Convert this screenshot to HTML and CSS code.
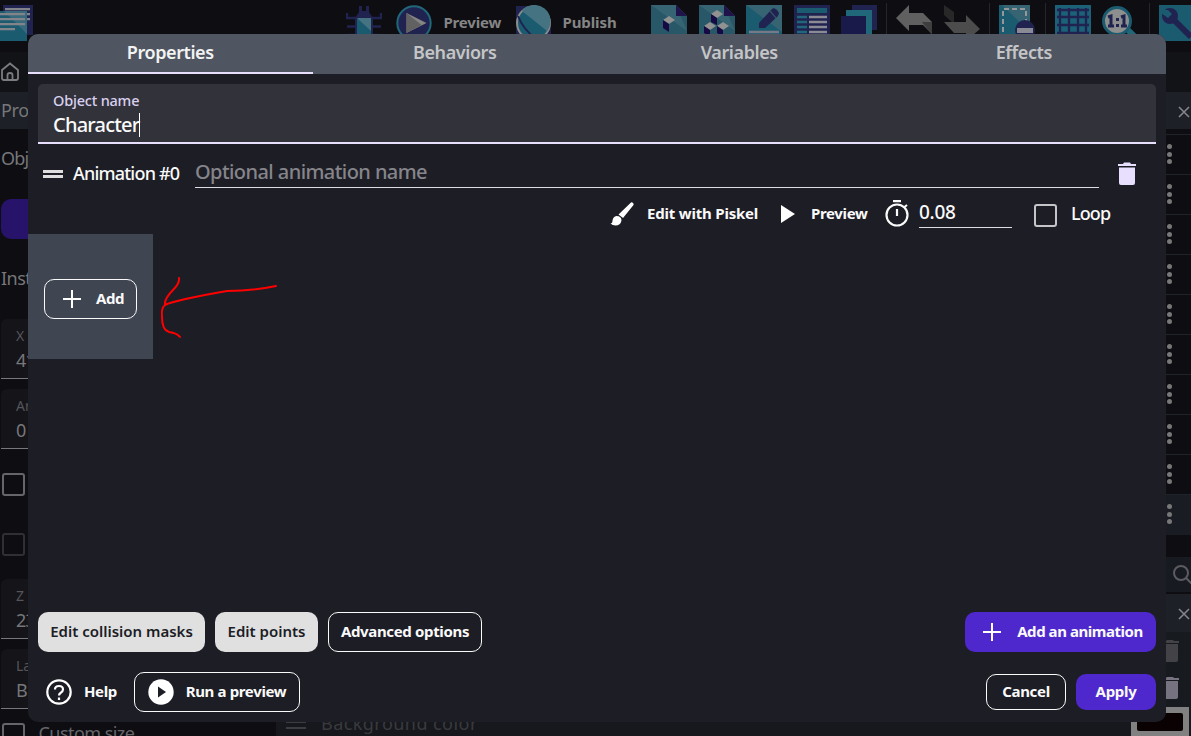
FILE: index.html
```html
<!DOCTYPE html>
<html lang="en">
<head>
<meta charset="utf-8">
<title>Object editor</title>
<link rel="stylesheet" href="styles.css">
</head>
<body>
<div class="app">
  <header class="toolbar">
    <svg class="icon project" viewBox="0 0 36 36"><path fill="#202250" d="M4 0h30v30H4z"/><path fill="#1b5b70" d="M0 6h28v30H0z"/><path fill="#467382" opacity=".65" d="M5 6h23v23z"/><path stroke="#828489" stroke-width="2.3" d="M6 4.200h25M1 9.200h25M28 9.200h3M1 14.200h25M28 14.200h3M1 19.200h25M1 24.200h15"/></svg>
    <div class="tools">
      <svg class="icon" viewBox="0 0 36 36"><path fill="none" stroke="#202250" stroke-width="2.500" d="M1 8v5h9M1 21.500h34M1 30h34M35 8v5h-9"/><path fill="#202250" d="M13 1h3v5h4V1h3v6l4 6H9l4-6z"/><path fill="#1b5b70" stroke="#202250" stroke-width="2" d="M10 13h16v23H10z"/><path fill="#467382" d="M11 13h14v13z"/></svg>
      <svg class="icon play" viewBox="0 0 36 36"><circle cx="18" cy="18" r="16.700" fill="#202250" stroke="#206779" stroke-width="2"/><path fill="#858585" d="M10.500 8v20l20-10z"/><path fill="#616161" d="M10.500 8v20l15-8z"/></svg>
      <span class="tool-label preview-label">Preview</span>
      <svg class="icon" viewBox="0 0 36 36"><path fill="#202250" d="M1 1h18v34H1zM18 20h18v15H18z"/><circle cx="18.500" cy="18" r="16.500" fill="#1b5b70" stroke="#8a8b8c" stroke-width="2"/><path fill="#467382" d="M7 6a16 16 0 0 1 25 20z"/><path fill="none" stroke="#202250" stroke-width="2" d="M3 11q5 13 18 23"/></svg>
      <span class="tool-label publish-label">Publish</span>
      <svg class="icon" viewBox="0 0 36 36"><path fill="#285767" d="M0 0h25l11 11v25H0z"/><path fill="#376472" d="M0 0h25l11 26z"/><path fill="#20134c" d="M25 0v11h11z"/><path fill="#919191" d="M12 15l6-4 6 4-6 4z"/><path fill="#170944" d="M12 15l6 4v8l-6-4z"/></svg>
      <svg class="icon" viewBox="0 0 36 36"><path fill="#285767" d="M0 0h25l11 11v25H0z"/><path fill="#376472" d="M0 0h25l11 26z"/><path fill="#20134c" d="M25 0v11h11z"/><path fill="#919191" d="M12 9l6-4 6 4-6 4zM5 21l6-4 6 4-6 4zM18 21l6-4 6 4-6 4z"/><path fill="#170944" d="M12 9l6 4v7l-6-3zM5 21l6 4v7l-6-4zM18 21l6 4v7l-6-4z"/></svg>
      <svg class="icon" viewBox="0 0 36 36"><path fill="#1b5b70" d="M0 0h36v36H0z"/><path fill="#376472" d="M0 0h36v27z"/><path fill="#202250" d="M13 22v-4L26 4l2-1q3 1 5 5l-1 3L19 23h-6z"/><path stroke="#37526a" stroke-width="1.200" d="M24 6l6 7"/><path stroke="#777987" stroke-width="2.500" d="M3 27h30"/></svg>
      <svg class="icon" viewBox="0 0 36 36"><path fill="#202250" d="M0 0h36v36H0z"/><path fill="#1b5b70" d="M3 3h30v5H3z"/><path stroke="#206779" stroke-width="2.500" d="M3 12h10M3 17h10M3 22h10M3 27h10"/><path stroke="#8a8b93" stroke-width="2.500" d="M15 12h18M15 17h18M15 22h18M15 27h18"/></svg>
      <svg class="icon" viewBox="0 0 36 36"><path fill="#202250" d="M11 0h25v25H11z"/><path fill="#206779" d="M5 5h26v26H5z"/><path fill="#19194a" d="M0 11h25v25H0z"/></svg>
      <i class="divider"></i>
      <svg class="icon" viewBox="0 0 36 36"><path fill="#606060" d="M0 13L13 0v8h14l9 9v12l-9-9H13v6z"/><path fill="#3e3e3e" d="M26 17h10v13z"/></svg>
      <svg class="icon" viewBox="0 0 36 36"><path fill="#282828" d="M0 0l10 7v12L0 10z"/><path fill="#4c4c4c" d="M0 17h22v-7l14 14-14 12v-8H10z"/></svg>
      <i class="divider"></i>
      <svg class="icon" viewBox="0 0 36 36"><path fill="#1b5b70" d="M0 0h31v36H0z"/><path fill="#376472" d="M3 0h28v27z"/><path fill="none" stroke="#969799" stroke-width="2" stroke-dasharray="5 3" d="M4 27V4h23v14"/><circle cx="26" cy="25" r="10" fill="#202250"/><path fill="#8a8a94" d="M18 23h16v5H18z"/></svg>
      <i class="divider"></i>
      <svg class="icon" viewBox="0 0 36 36"><path fill="#1b6178" d="M0 0h36v36H0z"/><path stroke="#202250" stroke-width="2.300" d="M5 3v31M14 3v31M23 3v31M31 3v31M2 5h32M2 12h32M2 20h32M2 28h32"/></svg>
      <svg class="icon" viewBox="0 0 36 36"><path stroke="#206779" stroke-width="6" d="M25 24l12 12"/><circle cx="15" cy="16" r="13.500" fill="#8d8e8e" stroke="#1b5b70" stroke-width="3"/><path fill="none" stroke="#202250" stroke-width="3" d="M6 12l3-1v10M6 21h6M19 12l3-1v10M19 21h6"/><path fill="#202250" d="M14 13h3v3h-3zM14 19h3v3h-3z"/></svg>
      <i class="divider last"></i>
      <svg class="icon" viewBox="0 0 36 36"><path fill="#1b5b70" d="M0 0h36v36H0z"/><path stroke="#202250" stroke-width="6" d="M12 12l20 20"/><circle cx="11" cy="11" r="8" fill="#202250"/><path fill="#1b5b70" d="M2 5h7l4 4-4 4-7-5z"/></svg>
    </div>
  </header>
  <div class="tabstrip"><svg class="home" viewBox="0 0 20 20"><path d="M2 8l8-6.500L18 8v8q0 2-2 2H4q-2 0-2-2z"/><path d="M7.500 18v-5q0-2 2.500-2t2.500 2v5"/></svg></div>
  <div class="workspace">
    <aside class="inspector">
      <div class="panel-head">Pro</div>
      <div class="object-title">Obj</div>
      <div class="purple-button"></div>
      <div class="instance-title">Inst</div>
      <div class="prop"><small>X</small><span>41</span></div>
      <div class="prop"><small>An</small><span>0</span></div>
      <i class="check first"></i>
      <i class="check disabled"></i>
      <div class="prop zprop"><small>Z</small><span>23</span></div>
      <div class="prop"><small>La</small><span>B</span></div>
      <div class="custom"><i class="check"></i><span>Custom size</span></div>
    </aside>
    <section class="scene"><i class="grip"></i><span>Background color</span></section>
    <aside class="objects">
      <div class="panel-head"><svg class="cross" viewBox="0 0 12 12"><path d="M1 1l10 10M11 1L1 11"/></svg></div>
      <div class="rows">
        <div class="row"><b></b><b></b><b></b></div><div class="row"><b></b><b></b><b></b></div><div class="row"><b></b><b></b><b></b></div><div class="row"><b></b><b></b><b></b></div><div class="row"><b></b><b></b><b></b></div><div class="row"><b></b><b></b><b></b></div><div class="row"><b></b><b></b><b></b></div><div class="row"><b></b><b></b><b></b></div><div class="row"><b></b><b></b><b></b></div><div class="row chosen"><b></b><b></b><b></b></div>
      </div>
      <div class="search"><svg viewBox="0 0 20 20"><circle cx="9" cy="9" r="7"/><path d="M14 14l6 6"/></svg></div>
      <div class="panel-head second"><svg class="cross" viewBox="0 0 12 12"><path d="M1 1l10 10M11 1L1 11"/></svg></div>
      <div class="layers">
        <svg class="bin faded" viewBox="0 0 18 23"><path d="M0 2h5l1-1h6l1 1h5v2H0zM1 5h16v16q0 2-2 2H3q-2 0-2-2z"/></svg>
        <svg class="bin" viewBox="0 0 18 23"><path d="M0 2h5l1-1h6l1 1h5v2H0zM1 5h16v16q0 2-2 2H3q-2 0-2-2z"/></svg>
        <div class="swatch"><div></div></div>
      </div>
    </aside>
  </div>
</div>

<div class="overlay">
  <main class="dialog">
    <nav class="tabs"><span class="tab active">Properties</span><span class="tab">Behaviors</span><span class="tab">Variables</span><span class="tab">Effects</span></nav>
    <div class="name-field"><label>Object name</label><div class="value"><span>Character</span><i class="caret"></i></div></div>
    <div class="animation">
      <i class="grip"></i><span class="anim-title">Animation #0</span>
      <div class="anim-input"><span>Optional animation name</span></div>
      <svg class="trash" viewBox="0 0 18 23"><path d="M0 2h5l1-1.500h6L13 2h5v2H0zM1 5.500h16V21q0 2-2 2H3q-2 0-2-2z"/></svg>
    </div>
    <div class="controls">
      <svg class="brush" viewBox="0 0 24 24"><path d="M21 .5q1-.5 2 .5t.5 2L13 16 8.500 12.500zM6.500 14q5 0 5 4.500-1 5-6 5-3 0-5-2 2 0 2-3 .5-4 4-4.500z"/></svg>
      <span class="bold piskel">Edit with Piskel</span>
      <svg class="triangle" viewBox="0 0 14 18"><path d="M0 0l14 9-14 9z"/></svg>
      <span class="bold prev">Preview</span>
      <svg class="timer" viewBox="0 0 24 28"><circle cx="12" cy="16" r="10.500"/><path d="M8 2.200h8M12 10v7M19.500 8l2.500-2"/></svg>
      <div class="time"><span>0.08</span></div>
      <i class="loop-check"></i><span class="loop">Loop</span>
    </div>
    <div class="frames">
      <div class="frame"><button class="btn outline add"><svg class="plus" viewBox="0 0 18 18"><path d="M9 0v18M0 9h18"/></svg><span>Add</span></button></div>
      <svg class="arrow" viewBox="0 0 120 65"><path d="M18 2q1 5-6 12Q3 23 4 29q10-5 62-14 25 0 49-5M4 29Q0 32 1 41q0 13 7 15 8 1 11 5"/></svg>
    </div>
    <div class="actions">
      <button class="btn light masks"><span>Edit collision masks</span></button>
      <button class="btn light points"><span>Edit points</span></button>
      <button class="btn outline advanced"><span>Advanced options</span></button>
      <button class="btn primary add-animation"><svg class="plus" viewBox="0 0 18 18"><path d="M9 0v18M0 9h18"/></svg><span>Add an animation</span></button>
    </div>
    <footer class="footer">
      <svg class="help" viewBox="0 0 26 26"><circle cx="13" cy="13" r="11.700"/><path d="M9 10.500Q9 7 13 7t4 3.500q0 2-2.500 3.500Q13 15 13 16.500M13 18.500v2.500"/></svg>
      <span class="bold help-label">Help</span>
      <button class="btn outline run"><svg class="run-icon" viewBox="0 0 26 26"><circle cx="13" cy="13" r="12.700"/><path d="M10 7.500v11l8-5.500z"/></svg><span>Run a preview</span></button>
      <button class="btn outline small cancel"><span>Cancel</span></button>
      <button class="btn primary small apply"><span>Apply</span></button>
    </footer>
  </main>
</div>
</body>
</html>
```
FILE: styles.css
```css
* { box-sizing: border-box; }
body { margin: 0; height: 736px; overflow: hidden; background: #0d0d12; font-family: "Noto Sans", "Open Sans", sans-serif; color: #fafafa; }
svg { display: block; flex: none; }
span, label { white-space: nowrap; }
i { display: block; flex: none; }

/* Dimmed editor */
.app { height: 736px; display: flex; flex-direction: column; overflow: hidden; }
.toolbar { height: 52px; flex: none; display: flex; padding-top: 5px; }
.icon { width: 36px; height: 36px; }
.project { margin-left: -1px; }
.tools { display: flex; margin-left: 311px; gap: 11.5px; }
.play { margin-left: 2.5px; }
.tool-label { font-size: 15px; font-weight: 700; color: #858585; line-height: 35px; }
.preview-label { width: 60px; letter-spacing: -.2px; }
.publish-label { width: 65px; letter-spacing: -.1px; }
.publish-label + .icon { margin-left: 12px; }
.divider { width: 1px; height: 33px; margin: -2px -2.3px 0; background: #25262b; }
.divider.last { margin-left: -1px; margin-right: -2.5px; }
.tabstrip { height: 40px; flex: none; background: #121317; padding: 10px 0 0; }
.home { width: 20px; height: 20px; fill: none; stroke: #7c7c80; stroke-width: 1.8; }
.workspace { height: 644px; display: flex; }
.inspector { width: 276px; padding-left: 1px; color: #777779; font-size: 18px; }
.panel-head { height: 37px; line-height: 37px; background: #1d2027; margin-left: -1px; padding-left: 1px; letter-spacing: -.4px; }
.object-title { height: 70px; line-height: 59px; letter-spacing: -.8px; }
.purple-button { height: 40px; border-radius: 10px; background: #28136a; }
.instance-title { height: 80px; line-height: 79px; letter-spacing: -.5px; }
.prop { height: 60px; margin-bottom: 10px; padding: 9px 15px 0; background: #141419; border-bottom: 1px solid #77777d; border-radius: 6px 6px 0 0; display: flex; flex-direction: column; }
.prop small { font-size: 14px; line-height: 16px; color: #55555a; }
.prop span { line-height: 32px; letter-spacing: -1px; }
.check { width: 23px; height: 23px; border: 2px solid #66666a; border-radius: 3px; margin-left: .5px; }
.check.first { margin-top: 24px; }
.check.disabled { margin-top: 37px; border-color: #303034; }
.zprop { margin-top: 23px; }
.custom { display: flex; gap: 14px; padding-top: 4px; line-height: 21px; letter-spacing: -.55px; }
.custom span { color: #66666a; }
.scene { flex: 1; background: #17181d; display: flex; align-items: flex-end; padding: 0 0 1px 10px; color: #393a3e; font-size: 18px; gap: 15px; letter-spacing: .45px; }
.grip { width: 20px; height: 8px; border: solid #dedede; border-width: 3px 0; }
.scene .grip { border-color: #3c3d40; border-width: 2px 0; margin-bottom: 6px; }
.objects { width: 60px; }
.objects .panel-head { display: flex; align-items: center; justify-content: flex-end; padding-right: 1px; margin: 0; }
.objects .panel-head svg { margin-top: 2px; }
.cross { width: 12px; height: 12px; fill: none; stroke: #85858c; stroke-width: 1.6; }
.rows { padding-top: 5px; }
.row { height: 40px; border-top: 1px solid #202229; padding: 9px 0 0 35.5px; display: flex; flex-direction: column; gap: 2.5px; }
.row b { width: 5px; height: 5px; border-radius: 50%; background: #777; }
.row.chosen { background: #191d23; height: 41px; }
.search { height: 35px; margin-top: 22px; background: #171a20; padding: 7px 0 0 41px; }
.search svg { width: 20px; height: 20px; fill: none; stroke: #5b5b61; stroke-width: 2; }
.objects .second { margin-top: 2px; height: 38px; }
.layers { background: #171a1f; height: 104px; padding-top: 7px; display: flex; flex-direction: column; align-items: flex-start; }
.bin { width: 18px; height: 23px; margin: 0 0 14px 30px; flex: none; fill: #77727f; }
.bin.faded { fill: #424247; }
.swatch { width: 58px; height: 29px; flex: none; background: #818181; margin-top: -6px; padding: 6px; }
.swatch div { height: 18px; background: #0a0202; border-radius: 2px; }

/* Dialog */
.overlay { position: absolute; inset: 0; padding: 34px 25px 14px 28px; overflow: hidden; }
.dialog { height: 688px; background: #1d1d26; border-radius: 10px; overflow: hidden; display: flex; flex-direction: column; font-weight: 500; }
.tabs { height: 40px; flex: none; display: grid; grid-template-columns: repeat(4, 1fr); background: #4f5662; }
.tab { text-align: center; font-size: 18px; font-weight: 600; line-height: 37px; color: #c5c5c7; height: 40px; letter-spacing: -.42px; }
.tab.active { color: #f3f3f3; border-bottom: 2px solid #e8dfff; }
.name-field { height: 60px; margin: 10px 10px 0; flex: none; background: #32323b; border-bottom: 2px solid #e8dfff; border-radius: 5px 5px 0 0; padding: 6px 15px 0; display: flex; flex-direction: column; }
.name-field label { color: #d9d0ef; font-size: 14.5px; line-height: 21px; height: 21px; letter-spacing: -.2px; }
.value { display: flex; font-size: 20px; line-height: 28px; letter-spacing: -.8px; }
.caret { width: 1px; height: 24px; background: #fff; margin-top: 2px; }
.animation { height: 46px; flex: none; display: flex; padding-left: 15px; }
.animation > .grip { margin-top: 26px; }
.anim-title { width: 107px; margin: 15px 0 0 10px; font-size: 18px; line-height: 28px; letter-spacing: -.8px; }
.anim-input { width: 904px; height: 44px; margin-left: 15px; border-bottom: 1px solid #dcdde5; color: #85858a; font-size: 20px; line-height: 56px; letter-spacing: -.57px; }
.trash { width: 18px; height: 23px; margin: 18px 0 0 19px; fill: #e8dfff; }
.controls { height: 44px; flex: none; display: flex; align-items: center; padding-left: 582px; }
.brush { width: 24px; height: 24px; fill: #fff; margin-top: 3px; }
.bold { font-weight: 700; font-size: 15px; line-height: 20px; }
.piskel { width: 111px; margin: 1px 0 0 13px; letter-spacing: -.2px; }
.triangle { width: 14px; height: 18px; fill: #fff; margin: 3px 0 0 23px; }
.prev { width: 57px; margin: 1px 0 0 16px; letter-spacing: -.35px; }
.timer { width: 24px; height: 28px; margin: 1px 0 0 16.5px; fill: none; stroke: #fafafa; stroke-width: 2.2; }
.time { width: 93px; height: 32px; border-bottom: 1px solid #dcdde5; font-size: 19px; line-height: 33px; margin: 0 0 1px 10.5px; letter-spacing: -.3px; }
.loop-check { width: 23px; height: 23px; border: 2px solid #c5c5c9; border-radius: 3px; margin: 6px 0 0 21.5px; }
.loop { margin: 2px 0 0 14.5px; font-size: 18px; letter-spacing: -.9px; }
.frames { height: 378px; flex: none; display: flex; align-items: flex-start; }
.frame { width: 125px; height: 125px; background: #404552; padding: 45px 16px; }
.arrow { width: 120px; height: 65px; margin: 42px 0 0 7.5px; fill: none; stroke: #f00; stroke-width: 2; stroke-linecap: round; }
.btn { height: 40px; border-radius: 10px; border: 1px solid transparent; padding: 0; margin: 0; color: #fafafa; background: none; font: 700 15px/20px "Noto Sans", sans-serif; display: flex; align-items: center; justify-content: center; }
.btn span { margin-top: -2px; }
.outline { border-color: #fafafa; }
.light { background: #e0e0e0; color: #1d1d26; font-weight: 600; }
.primary { background: #4f28cd; }
.plus { width: 18px; height: 18px; fill: none; stroke: #fff; stroke-width: 2; }
.add { width: 93px; gap: 15px; padding-left: 6px; letter-spacing: -.5px; }
.actions { display: flex; padding: 0 10px; gap: 10px; height: 40px; flex: none; }
.masks { width: 167px; }
.points { width: 103px; }
.advanced { width: 154px; letter-spacing: -.35px; }
.add-animation { width: 191px; margin-left: auto; gap: 16px; padding-left: 5px; letter-spacing: -.45px; }
.footer { height: 40px; margin-top: 20px; padding: 0 10px 0 18px; display: flex; align-items: center; }
.help { width: 26px; height: 26px; fill: none; stroke: #fff; stroke-width: 2.2; }
.help-label { width: 33px; margin: -2px 0 0 12px; letter-spacing: -.4px; }
.run { width: 166px; margin-left: 17px; gap: 12px; letter-spacing: -.35px; }
.run-icon { width: 26px; height: 26px; fill: #fff; }
.run-icon path { fill: #1d1d26; }
.small { height: 36px; width: 80px; letter-spacing: -.3px; }
.cancel { margin-left: auto; }
.apply { margin-left: 10px; }
```
